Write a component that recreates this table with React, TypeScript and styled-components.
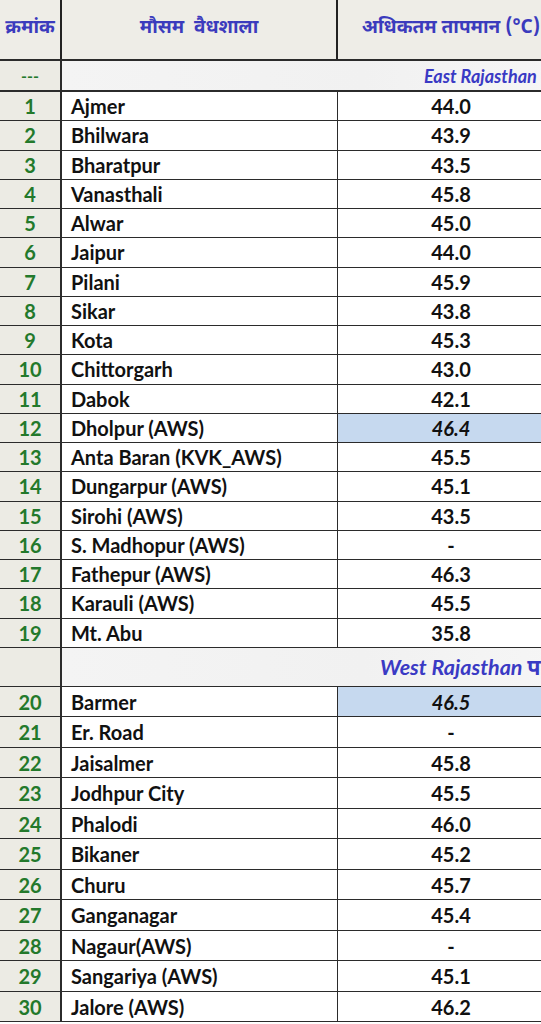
import styled, { createGlobalStyle } from 'styled-components';

const GlobalStyle = createGlobalStyle`
  html, body {
    margin: 0;
    padding: 0;
    background: #ffffff;
  }
`;

const Page = styled.div`
  width: 541px;
  height: 1024px;
  overflow: hidden;
  background: #ffffff;
  font-family: Lato, 'Open Sans', 'Noto Sans', sans-serif;
`;

const Sheet = styled.div`
  width: 564px;
  display: flex;
  flex-direction: column;
`;

const Row = styled.div<{ $h: number; $thick?: boolean }>`
  display: grid;
  grid-template-columns: 62px 276px 226px;
  height: ${p => p.$h}px;
  box-sizing: border-box;
  border-bottom: ${p => (p.$thick ? 2 : 1.5)}px solid #2b2b2b;
`;

const IndexCell = styled.div`
  display: flex;
  align-items: center;
  justify-content: center;
  background: #ecebe4;
  border-right: 2px solid #2b2b2b;
  color: #23792b;
  font-weight: 700;
  font-size: 20px;
`;

const NameCell = styled.div`
  display: flex;
  align-items: center;
  padding-left: 9px;
  border-right: 1.5px solid #2b2b2b;
  color: #111111;
  font-weight: 700;
  font-size: 20px;
  white-space: nowrap;
`;

const TempCell = styled.div<{ $hot?: boolean }>`
  display: flex;
  align-items: center;
  justify-content: center;
  background: ${p => (p.$hot ? '#c6d9ef' : 'transparent')};
  color: #111111;
  font-weight: 700;
  font-style: ${p => (p.$hot ? 'italic' : 'normal')};
  font-size: 20px;
`;

const HeadCell = styled.div<{ $last?: boolean }>`
  display: flex;
  align-items: center;
  justify-content: center;
  padding-bottom: 2px;
  background: #eeede7;
  border-right: ${p => (p.$last ? 'none' : '2px solid #222222')};
  color: #3b3bbd;
  font-family: 'Noto Sans Devanagari', 'Noto Sans', 'Lato', sans-serif;
  font-weight: 700;
  font-size: 19px;
  white-space: pre;
`;

const SectionIndex = styled(IndexCell)`
  font-size: 16px;
`;

const SectionLabel = styled.div<{ $offset: number; $size: number }>`
  grid-column: 2 / 4;
  display: flex;
  align-items: center;
  padding-left: ${p => p.$offset}px;
  background: linear-gradient(90deg, #f4f4f4 0%, #f1f1f1 60%, #f6f6f6 100%);
  color: #3a3ac4;
  font-weight: 700;
  font-style: italic;
  font-size: ${p => p.$size}px;
  white-space: nowrap;
  overflow: hidden;
`;

type Station = { name: string; temp: string; hot?: boolean };

const east: Station[] = [
  { name: 'Ajmer', temp: '44.0' },
  { name: 'Bhilwara', temp: '43.9' },
  { name: 'Bharatpur', temp: '43.5' },
  { name: 'Vanasthali', temp: '45.8' },
  { name: 'Alwar', temp: '45.0' },
  { name: 'Jaipur', temp: '44.0' },
  { name: 'Pilani', temp: '45.9' },
  { name: 'Sikar', temp: '43.8' },
  { name: 'Kota', temp: '45.3' },
  { name: 'Chittorgarh', temp: '43.0' },
  { name: 'Dabok', temp: '42.1' },
  { name: 'Dholpur (AWS)', temp: '46.4', hot: true },
  { name: 'Anta Baran (KVK_AWS)', temp: '45.5' },
  { name: 'Dungarpur (AWS)', temp: '45.1' },
  { name: 'Sirohi (AWS)', temp: '43.5' },
  { name: 'S. Madhopur (AWS)', temp: '-' },
  { name: 'Fathepur (AWS)', temp: '46.3' },
  { name: 'Karauli (AWS)', temp: '45.5' },
  { name: 'Mt. Abu', temp: '35.8' },
];

const west: Station[] = [
  { name: 'Barmer', temp: '46.5', hot: true },
  { name: 'Er. Road', temp: '-' },
  { name: 'Jaisalmer', temp: '45.8' },
  { name: 'Jodhpur City', temp: '45.5' },
  { name: 'Phalodi', temp: '46.0' },
  { name: 'Bikaner', temp: '45.2' },
  { name: 'Churu', temp: '45.7' },
  { name: 'Ganganagar', temp: '45.4' },
  { name: 'Nagaur(AWS)', temp: '-' },
  { name: 'Sangariya (AWS)', temp: '45.1' },
  { name: 'Jalore (AWS)', temp: '46.2' },
];

const StationRow = ({ no, s, h }: { no: number; s: Station; h: number }) => (
  <Row $h={h}>
    <IndexCell>{no}</IndexCell>
    <NameCell>{s.name}</NameCell>
    <TempCell $hot={s.hot}>{s.temp}</TempCell>
  </Row>
);

const App = () => (
  <>
    <GlobalStyle />
    <Page>
      <Sheet>
        <Row $h={61} $thick>
          <HeadCell>क्रमांक</HeadCell>
          <HeadCell>मौसम  वैधशाला</HeadCell>
          <HeadCell $last>अधिकतम तापमान (°C)</HeadCell>
        </Row>
        <Row $h={31} $thick>
          <SectionIndex>---</SectionIndex>
          <SectionLabel $offset={362} $size={18}>East Rajasthan</SectionLabel>
        </Row>
        {east.map((s, i) => (
          <StationRow key={s.name} no={i + 1} s={s} h={29.25} />
        ))}
        <Row $h={39}>
          <IndexCell />
          <SectionLabel $offset={318} $size={21.5}>West Rajasthan पश्चिमी</SectionLabel>
        </Row>
        {west.map((s, i) => (
          <StationRow key={s.name} no={i + 20} s={s} h={30.5} />
        ))}
      </Sheet>
    </Page>
  </>
);

export default App;
